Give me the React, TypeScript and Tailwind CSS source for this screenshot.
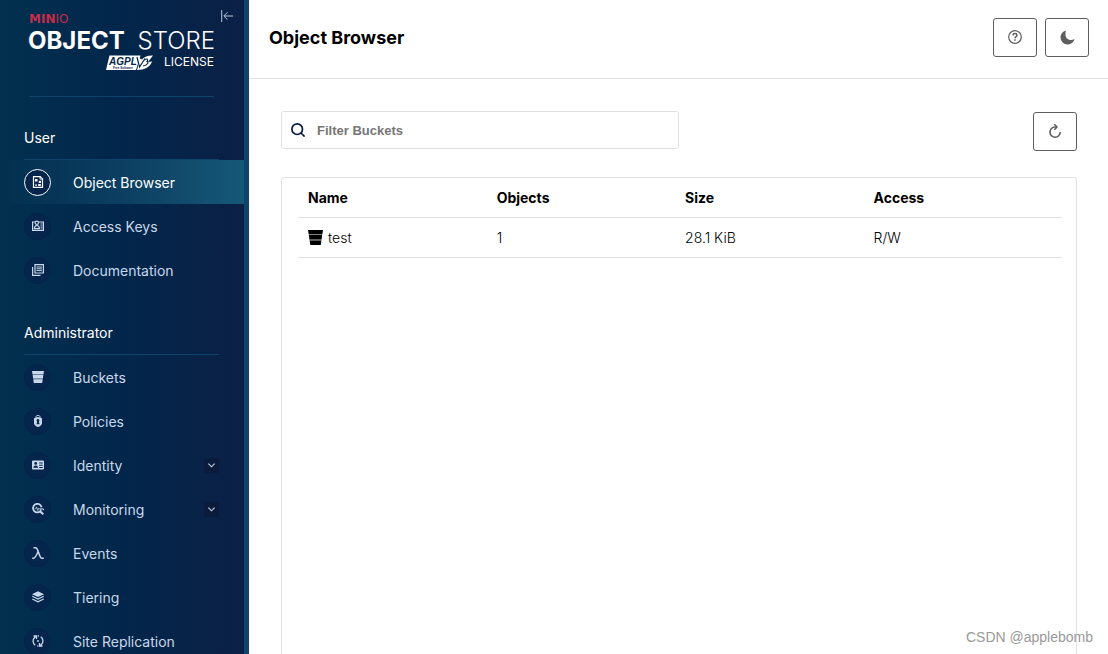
import React, { useState } from "react"

const ObjectBrowserIcon = () => (
  <svg width="12" height="12" viewBox="0 0 12 12" fill="none" stroke="currentColor">
    <path d="M1.500.6h6.700l2.300 2.300v8.500h-9z" strokeWidth="1.200" />
    <path d="M8 .5v2.600h2.500" strokeWidth="0.8" />
    <path d="M3 3h2.500v2.500H3zM6.800 4.800h2.200v2.200H6.800zM6.200 8h2.600v2H6.200zM4 7.500l1.200 2.300H3z" fill="currentColor" stroke="none" />
  </svg>
)

const AccessKeysIcon = () => (
  <svg width="12" height="12" viewBox="0 0 12 12" fill="none" stroke="currentColor">
    <path d="M3 2H.6v8.400h10.800V2H7" strokeWidth="1.200" />
    <circle cx="4.900" cy="2.800" r="1.700" strokeWidth="1.200" />
    <path d="M2.300 8.700c.2-2 1.200-3.200 2.600-3.200s2.400 1.200 2.600 3.200z" strokeWidth="1.200" />
    <path d="M8.500 4h2M8.500 6h2M8.500 8h2" strokeWidth="1.200" />
  </svg>
)

const DocumentationIcon = () => (
  <svg width="12" height="12" viewBox="0 0 12 12" fill="none" stroke="currentColor">
    <path d="M3 .6h8.400v8.400H3z" strokeWidth="1.200" />
    <path d="M.6 3v8.400H8.500" strokeWidth="1.200" />
    <path d="M4.500 3h5.500M4.500 4.800h5.500M4.500 6.600h5.500" strokeWidth="1" />
  </svg>
)

const BucketIcon = ({ size = 12 }) => (
  <svg width={size} height={size} viewBox="0 0 12 12" fill="currentColor">
    <path d="M0 0h12l-.5 3.200H.5z" />
    <path d="M.7 4h10.600l-.4 3.500H1.100z" />
    <path d="M1.300 8.300h9.400L10.200 12H1.800z" />
    <path d="M.5 3.200h11l-.1.800H.6zM1.100 7.500h9.800l-.1.800H1.200z" opacity="0.500" />
  </svg>
)

const PoliciesIcon = () => (
  <svg width="12" height="12" viewBox="0 0 12 12" fill="none">
    <path d="M4 3V1.800C4 .9 4.700.5 6 .5s2 .4 2 1.300V3" stroke="currentColor" />
    <path
      fillRule="evenodd"
      d="M2 3.200 6 2l4 1.200v5C10 10 8 11.300 6 12 4 11.300 2 10 2 8.200zM6 4a1.400 1.400 0 0 0-.9 2.500L4.500 9.300h3L6.900 6.500A1.400 1.400 0 0 0 6 4z"
      fill="currentColor"
    />
  </svg>
)

const IdentityIcon = () => (
  <svg width="12" height="12" viewBox="0 0 12 12">
    <path
      fillRule="evenodd"
      d="M1 1.500h10a1 1 0 0 1 1 1v7a1 1 0 0 1-1 1H1a1 1 0 0 1-1-1v-7a1 1 0 0 1 1-1zM3.700 3a1.400 1.400 0 1 0 0 2.800 1.400 1.400 0 0 0 0-2.800zM1.300 8.800h4.800c0-1.500-.8-2.400-2.400-2.400s-2.400.9-2.400 2.400zM7.200 3.500v1h3.500v-1zM7.200 5.700v1h3.500v-1zM7.200 7.900v1h3.500v-1z"
      fill="currentColor"
    />
  </svg>
)

const MonitoringIcon = () => (
  <svg width="12" height="12" viewBox="0 0 12 12" fill="none" stroke="currentColor">
    <path d="M9.600 4.300a4.300 4.300 0 1 0-.5 3" strokeWidth="1.800" />
    <path d="M2.600 5.800h1.200l.8-2 1.200 3.800.9-2.500.7 1h2.300" strokeWidth="0.800" />
    <path d="m7.700 8 3.600 3.300" strokeWidth="2" />
    <path d="M8.200 6h3.300v1.200" strokeWidth="1" />
  </svg>
)

const EventsIcon = () => (
  <svg width="12" height="12" viewBox="0 0 12 12" fill="none" stroke="currentColor" strokeWidth="1.500">
    <path d="M1.500.8h2C4.500.8 5 1.500 5.300 2.400L8.200 9.700c.4 1 .9 1.500 1.700 1.500h1.900" />
    <path d="M6 4.800C4.700 8 3.300 11.200 1.500 11.200H.2" />
  </svg>
)

const TieringIcon = () => (
  <svg width="12" height="12" viewBox="0 0 12 12" fill="none" stroke="currentColor" strokeWidth="1.200">
    <path d="m6 .3 6 2.900-6 2.900L0 3.200z" fill="currentColor" stroke="none" />
    <path d="m.3 5.300 5.700 2.800 5.700-2.800M.3 8l5.700 2.800L11.700 8" />
  </svg>
)

const ReplicationIcon = () => (
  <svg width="12" height="12" viewBox="0 0 12 12" fill="none" stroke="currentColor" strokeWidth="1.300">
    <path d="M3.200 10.200A5 5 0 0 1 2.600 2.500L4.300 1.200M1.500 1h3v3" />
    <path d="M8.800 1.800a5 5 0 0 1 .6 7.700L7.700 10.800M10.500 11h-3V8M5.700 1h1.200M5.300 11h1" />
    <circle cx="6" cy="6" r="0.900" fill="currentColor" stroke="none" />
  </svg>
)

const HelpIcon = () => (
  <svg width="14" height="14" viewBox="0 0 14 14" fill="none" stroke="currentColor">
    <circle cx="7" cy="7" r="6.300" strokeWidth="1.200" />
    <path d="M5 5.500C5 4.200 5.800 3.600 7 3.600s2 .7 2 1.700C9 6.700 7 6.600 7 8.200" strokeWidth="1.500" />
    <path d="M6.200 9.200h1.600v1.500H6.200z" fill="currentColor" stroke="none" />
  </svg>
)

const MoonIcon = () => (
  <svg width="15" height="15" viewBox="0 0 15 15" fill="currentColor">
    <path d="M5.800.5C2.800 1.500.5 4.200.5 7.600a7 7 0 0 0 7 6.900c3.300 0 6.100-2.200 7-5.500-1.100.7-2.300 1-3.500 1C7.800 10 5.500 7.700 5.500 4.500c0-1.200-.1-2.700.3-4z" />
  </svg>
)

const RefreshIcon = () => (
  <svg width="14" height="14" viewBox="0 0 14 14" fill="none" stroke="currentColor">
    <path d="M8.500 3H7a5.100 5.100 0 1 0 5.200 5.100" strokeWidth="1.600" />
    <path d="M6.300.3 9 3 6.300 5.700" strokeWidth="1.500" />
  </svg>
)

const SearchIcon = () => (
  <svg width="14" height="14" viewBox="0 0 14 14" fill="none" stroke="currentColor" strokeWidth="1.700">
    <circle cx="6.200" cy="6.200" r="5.300" />
    <path d="m10 10 3.600 3.600" />
  </svg>
)

const CollapseIcon = () => (
  <svg width="12" height="12" viewBox="0 0 12 12" fill="none" stroke="currentColor">
    <path d="M.7 0v12M12 6H3M6.500 2.300 2.800 6l3.700 3.700" strokeWidth="1" />
  </svg>
)

const ChevronIcon = () => (
  <svg width="7" height="5" viewBox="0 0 7 5" fill="none" stroke="currentColor" strokeWidth="1.100">
    <path d="m.4.700 3.100 3.100L6.600.7" />
  </svg>
)

const Logo = () => (
  <svg className="w-full overflow-visible" viewBox="0 0 185 58" role="img" aria-label="MinIO Object Store">
    <text x="0" y="9" fill="#c72c48" fontFamily="DejaVu Sans, sans-serif" fontSize="12">
      <tspan fontWeight="700">MIN</tspan>IO
    </text>
    <g fill="#fff" fontFamily="Inter, sans-serif" fontSize="24">
      <text x="-1" y="35" fontWeight="700">OBJECT</text>
      <text x="186" y="35" fontWeight="300" textAnchor="end">STORE</text>
    </g>
    <path d="M80.500 41.500h31L107 56H77z" fill="#fff" />
    <text x="80" y="51" fill="#05274b" fontFamily="Liberation Sans, sans-serif" fontSize="10" fontWeight="700" fontStyle="italic">
      AGPL
    </text>
    <text x="84" y="55" fill="#05274b" fontFamily="Liberation Sans, sans-serif" fontSize="3" fontWeight="700">
      Free Software
    </text>
    <path d="M107 42.500c2 4 3 9 1 13.500 8 0 13-3 15-8.500l-4 .5 5-6.500c-4 0-8 .5-11 4z" fill="#fff" />
    <path d="m108 43 2.500 10 5.500-8.500M115 46.500c2-2.500 5-1.500 3 1 2 0 1 4-4 4.500" stroke="#05274b" strokeWidth="1.200" fill="none" />
    <text x="185" y="52" fill="#fff" fontFamily="Inter, sans-serif" fontSize="12" textAnchor="end">LICENSE</text>
  </svg>
)

const groups = [
  {
    title: "User",
    items: [
      { label: "Object Browser", icon: <ObjectBrowserIcon /> },
      { label: "Access Keys", icon: <AccessKeysIcon /> },
      { label: "Documentation", icon: <DocumentationIcon /> }
    ]
  },
  {
    title: "Administrator",
    items: [
      { label: "Buckets", icon: <BucketIcon /> },
      { label: "Policies", icon: <PoliciesIcon /> },
      { label: "Identity", icon: <IdentityIcon />, expandable: true },
      { label: "Monitoring", icon: <MonitoringIcon />, expandable: true },
      { label: "Events", icon: <EventsIcon /> },
      { label: "Tiering", icon: <TieringIcon /> },
      { label: "Site Replication", icon: <ReplicationIcon /> }
    ]
  }
]

const buckets = [{ name: "test", objects: "1", size: "28.1 KiB", access: "R/W" }]

const Sidebar = ({ active, onSelect }) => (
  <aside className="relative w-[249px] shrink-0 overflow-hidden border-r-[5px] border-[#0e446b] bg-linear-to-r from-[#02304f] via-[#02264b] to-[#0b2046]">
    <button aria-label="Collapse menu" className="absolute top-[10px] right-[11px] text-[#b9c8da]">
      <CollapseIcon />
    </button>
    <div className="mr-[30px] ml-[29px] border-b border-[#0e446b] pt-[14px] pb-6">
      <Logo />
    </div>
    <nav className="flex flex-col gap-[19px] pt-[19px]">
      {groups.map((group) => (
        <div key={group.title}>
          <h2 className="mr-[25px] ml-6 flex h-11 items-center border-b border-[#0e446b] text-sm text-white">
            {group.title}
          </h2>
          {group.items.map((item) => (
            <a
              key={item.label}
              href="#"
              onClick={() => onSelect(item.label)}
              className={`flex h-11 items-center pt-px pr-[25px] pl-6 text-sm ${
                active === item.label
                  ? "bg-linear-to-r from-transparent to-[#155878] text-white"
                  : "text-[#c8d8ea]"
              }`}>
              <span
                className={`mr-[22px] flex size-[27px] items-center justify-center rounded-full border bg-[#06254c] pb-px ${
                  active === item.label ? "border-white" : "border-[#04234a]"
                }`}>
                {item.icon}
              </span>
              {item.label}
              {item.expandable && (
                <span className="ml-auto flex size-[15px] items-center justify-center rounded-xs bg-[#0a1b3b]">
                  <ChevronIcon />
                </span>
              )}
            </a>
          ))}
        </div>
      ))}
    </nav>
  </aside>
)

const IconButton = ({ label, children }) => (
  <button
    aria-label={label}
    className="flex h-[39px] w-11 items-center justify-center rounded-[3px] border border-[#5e5e5e] pb-px text-[#5e5e5e]">
    {children}
  </button>
)

const App = () => {
  const [active, setActive] = useState("Object Browser")
  const [filter, setFilter] = useState("")

  const rows = buckets.filter((bucket) => bucket.name.includes(filter))

  return (
    <div className="relative flex h-screen overflow-hidden bg-white font-['Inter',sans-serif] text-black">
      <Sidebar active={active} onSelect={setActive} />

      <main className="flex min-w-0 flex-1 flex-col">
        <header className="flex items-center justify-between border-b border-[#e2e2e2] pt-[18px] pr-[19px] pb-[21px] pl-5">
          <h1 className="text-lg font-bold">Object Browser</h1>
          <div className="flex gap-2">
            <IconButton label="Help">
              <HelpIcon />
            </IconButton>
            <IconButton label="Dark mode">
              <MoonIcon />
            </IconButton>
          </div>
        </header>

        <div className="flex flex-1 flex-col pt-8 pr-[31px] pl-8">
          <div className="flex h-10 justify-between">
            <label className="flex h-[38px] w-1/2 items-center gap-3 rounded-[3px] border border-[#e2e2e2] px-[9px] text-[#081c42]">
              <SearchIcon />
              <input
                type="text"
                aria-label="Filter Buckets"
                value={filter}
                onChange={(e) => setFilter(e.target.value)}
                placeholder="Filter Buckets"
                className="h-full min-w-0 flex-1 pt-px font-['Liberation_Sans',sans-serif] text-[13px] font-bold outline-none placeholder:text-[#767676]"
              />
            </label>
            <div className="self-end">
              <IconButton label="Refresh">
                <RefreshIcon />
              </IconButton>
            </div>
          </div>

          <div className="mt-[26px] flex-1 rounded-t-[3px] border border-b-0 border-[#e2e2e2] pr-[14px] pl-4">
            <table className="w-full table-fixed border-separate border-spacing-0 text-left text-sm">
              <thead>
                <tr className="h-10 *:border-b *:border-[#e2e2e2]">
                  <th className="w-[26%] pl-[10px] font-bold">Name</th>
                  <th className="font-bold">Objects</th>
                  <th className="font-bold">Size</th>
                  <th className="font-bold">Access</th>
                </tr>
              </thead>
              <tbody>
                {rows.map((bucket) => (
                  <tr key={bucket.name} className="h-10 font-light *:border-b *:border-[#e2e2e2]">
                    <td className="pl-[10px]">
                      <div className="flex items-center gap-[5px]">
                        <BucketIcon size={15} />
                        {bucket.name}
                      </div>
                    </td>
                    <td>{bucket.objects}</td>
                    <td>{bucket.size}</td>
                    <td>{bucket.access}</td>
                  </tr>
                ))}
              </tbody>
            </table>
          </div>
        </div>
      </main>

      <span className="absolute right-[15px] bottom-[7px] font-['Liberation_Sans',sans-serif] text-sm text-[#999]">
        CSDN @applebomb
      </span>
    </div>
  )
}

export default App
